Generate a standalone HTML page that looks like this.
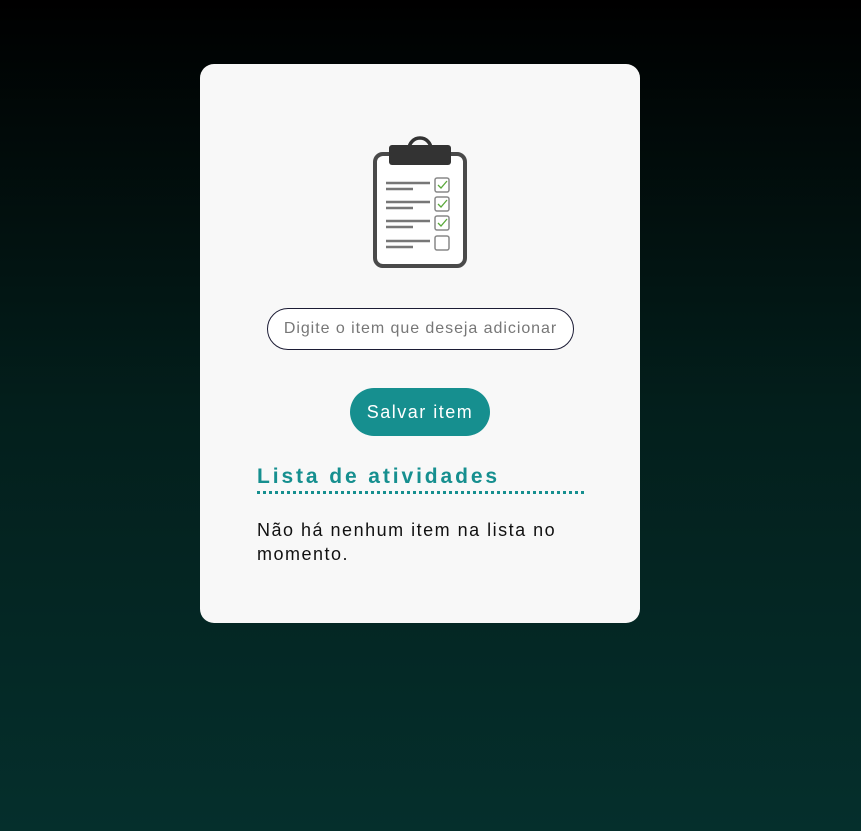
<!DOCTYPE html>
<html><head><meta charset="utf-8"><style>
*{margin:0;padding:0;box-sizing:border-box}
html,body{width:861px;height:831px;overflow:hidden}
body{background:linear-gradient(180deg,#000 0%,#031f1c 50%,#052f2c 100%);font-family:"Liberation Sans",sans-serif;position:relative}
.card{position:absolute;left:200px;top:64px;width:440px;height:559px;background:#f8f8f8;border-radius:14px}
.icon{position:absolute;left:172px;top:71px}
.inp{position:absolute;left:67px;top:244px;width:307px;height:42px;border:1px solid #1c1c35;border-radius:21px;background:#fff;font-size:16px;color:#777;line-height:40px;text-align:center;letter-spacing:0.95px;white-space:nowrap}
.btn{position:absolute;left:150px;top:324px;width:140px;height:48px;border-radius:24px;background:#168f8f;color:#fff;font-size:18px;line-height:48px;text-align:center;letter-spacing:1.5px}
h2{position:absolute;left:57px;top:401px;font-size:21px;color:#168f8f;font-weight:bold;letter-spacing:2.9px;white-space:nowrap}
.dots{position:absolute;left:57px;top:427px;width:327px;border-top:3px dotted #168f8f}
p{position:absolute;left:57px;top:454px;width:340px;font-size:18px;line-height:24px;color:#111;letter-spacing:1.5px}
</style></head><body>
<div class="card">
<svg class="icon" width="96" height="136" viewBox="0 0 96 136">
<rect x="3" y="19" width="90" height="112" rx="8" fill="#fff" stroke="#4a4a4a" stroke-width="4"/>
<path d="M37 14 a11 11 0 0 1 22 0" fill="none" stroke="#333" stroke-width="3.5"/>
<rect x="17" y="10" width="62" height="20" rx="3" fill="#333"/>
<g stroke="#777" stroke-width="2.5">
<line x1="14" y1="48" x2="58" y2="48"/><line x1="14" y1="54" x2="41" y2="54"/>
<line x1="14" y1="67" x2="58" y2="67"/><line x1="14" y1="73" x2="41" y2="73"/>
<line x1="14" y1="86" x2="58" y2="86"/><line x1="14" y1="92" x2="41" y2="92"/>
<line x1="14" y1="106" x2="58" y2="106"/><line x1="14" y1="112" x2="41" y2="112"/>
</g>
<g fill="#fff" stroke="#888" stroke-width="1.5">
<rect x="63" y="43" width="14" height="14" rx="2"/><rect x="63" y="62" width="14" height="14" rx="2"/>
<rect x="63" y="81" width="14" height="14" rx="2"/><rect x="63" y="101" width="14" height="14" rx="2"/>
</g>
<g fill="none" stroke="#5aa83a" stroke-width="1.3">
<path d="M66 50 l3 3 l6 -7"/><path d="M66 69 l3 3 l6 -7"/><path d="M66 88 l3 3 l6 -7"/>
</g>
</svg>
<div class="inp">Digite o item que deseja adicionar</div>
<div class="btn">Salvar item</div>
<h2>Lista de atividades</h2>
<div class="dots"></div>
<p>Não há nenhum item na lista no momento.</p>
</div>
</body></html>
